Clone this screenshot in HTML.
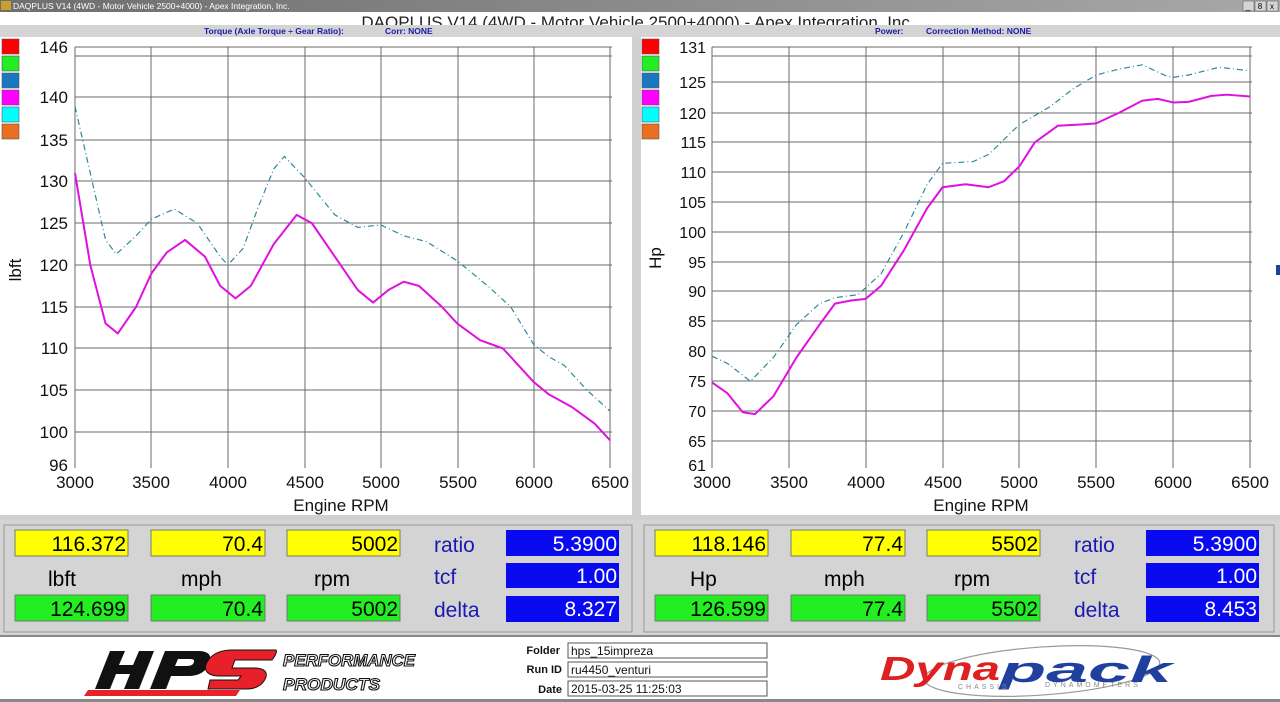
<!DOCTYPE html>
<html><head><meta charset="utf-8"><style>
html,body{margin:0;padding:0;width:1280px;height:702px;overflow:hidden;background:#fff;font-family:"Liberation Sans",sans-serif}
svg{position:absolute;left:0;top:0}
</style></head><body>
<svg width="1280" height="702" viewBox="0 0 1280 702" font-family="Liberation Sans, sans-serif">
<defs>
<linearGradient id="tb" x1="0" y1="0" x2="1" y2="0"><stop offset="0" stop-color="#6e6e6e"/><stop offset="1" stop-color="#a8a8a8"/></linearGradient>
</defs>
<rect width="1280" height="702" fill="#fff"/>
<!-- title bar -->
<rect x="0" y="0" width="1280" height="12" fill="url(#tb)"/>
<rect x="1" y="1" width="10" height="9" fill="#c8a030"/>
<text x="13" y="9" font-size="8.5" fill="#fff">DAQPLUS V14 (4WD - Motor Vehicle 2500+4000) - Apex Integration, Inc.</text>
<rect x="1243" y="1" width="11" height="10" fill="#d4d4d4" stroke="#555" stroke-width="0.5"/>
<rect x="1255" y="1" width="11" height="10" fill="#d4d4d4" stroke="#555" stroke-width="0.5"/>
<rect x="1267" y="1" width="11" height="10" fill="#d4d4d4" stroke="#555" stroke-width="0.5"/>
<text x="1272" y="9" font-size="8" text-anchor="middle">x</text>
<text x="1260" y="9" font-size="8" text-anchor="middle">8</text>
<text x="1248" y="9" font-size="8" text-anchor="middle">_</text>
<text x="638" y="28" font-size="17" text-anchor="middle" fill="#222">DAQPLUS V14 (4WD - Motor Vehicle 2500+4000) - Apex Integration, Inc.</text>
<rect x="0" y="25" width="1280" height="12" fill="#d4d4d4"/>
<text x="204" y="34" font-size="8.5" font-weight="bold" fill="#1a1aa8">Torque (Axle Torque ÷ Gear Ratio):</text>
<text x="385" y="34" font-size="8.5" font-weight="bold" fill="#1a1aa8">Corr: NONE</text>
<text x="875" y="34" font-size="8.5" font-weight="bold" fill="#1a1aa8">Power:</text>
<text x="926" y="34" font-size="8.5" font-weight="bold" fill="#1a1aa8">Correction Method: NONE</text>
<!-- panel separators -->
<rect x="632" y="37" width="9" height="483" fill="#d0d0d0"/>
<rect x="0" y="515" width="1280" height="5" fill="#d0d0d0"/>

<!-- legends -->
<g stroke="#555" stroke-width="0.6">
<rect x="2" y="39" width="17" height="15" fill="#ff0000"/><rect x="2" y="56" width="17" height="15" fill="#22ee22"/><rect x="2" y="73" width="17" height="15" fill="#1a78c0"/><rect x="2" y="90" width="17" height="15" fill="#ff00ff"/><rect x="2" y="97" width="0" height="0"/><rect x="2" y="107" width="17" height="15" fill="#00ffff"/><rect x="2" y="124" width="17" height="15" fill="#e87020"/>
<rect x="642" y="39" width="17" height="15" fill="#ff0000"/><rect x="642" y="56" width="17" height="15" fill="#22ee22"/><rect x="642" y="73" width="17" height="15" fill="#1a78c0"/><rect x="642" y="90" width="17" height="15" fill="#ff00ff"/><rect x="642" y="107" width="17" height="15" fill="#00ffff"/><rect x="642" y="124" width="17" height="15" fill="#e87020"/>
</g>

<!-- LEFT CHART grid -->
<g stroke="#6a6a6a" stroke-width="1">
<line x1="75" y1="47" x2="612" y2="47"/><line x1="75" y1="56" x2="612" y2="56"/>
<line x1="75" y1="97" x2="612" y2="97"/><line x1="75" y1="140" x2="612" y2="140"/><line x1="75" y1="181" x2="612" y2="181"/><line x1="75" y1="223" x2="612" y2="223"/><line x1="75" y1="265" x2="612" y2="265"/><line x1="75" y1="307" x2="612" y2="307"/><line x1="75" y1="348" x2="612" y2="348"/><line x1="75" y1="390" x2="612" y2="390"/><line x1="75" y1="432" x2="612" y2="432"/>
<line x1="75" y1="47" x2="75" y2="468"/><line x1="151" y1="47" x2="151" y2="468"/><line x1="228" y1="47" x2="228" y2="468"/><line x1="305" y1="47" x2="305" y2="468"/><line x1="381" y1="47" x2="381" y2="468"/><line x1="458" y1="47" x2="458" y2="468"/><line x1="534" y1="47" x2="534" y2="468"/><line x1="610" y1="47" x2="610" y2="468"/>
</g>
<g font-size="17" fill="#111" text-anchor="end">
<text x="68" y="53">146</text><text x="68" y="103">140</text><text x="68" y="146">135</text><text x="68" y="187">130</text><text x="68" y="229">125</text><text x="68" y="271">120</text><text x="68" y="313">115</text><text x="68" y="354">110</text><text x="68" y="396">105</text><text x="68" y="438">100</text><text x="68" y="471">96</text>
</g>
<g font-size="17" fill="#111" text-anchor="middle">
<text x="75" y="488">3000</text><text x="151" y="488">3500</text><text x="228" y="488">4000</text><text x="305" y="488">4500</text><text x="381" y="488">5000</text><text x="458" y="488">5500</text><text x="534" y="488">6000</text><text x="610" y="488">6500</text>
<text x="341" y="511">Engine RPM</text>
</g>
<text x="0" y="0" font-size="17" fill="#111" transform="translate(21,270) rotate(-90)" text-anchor="middle">lbft</text>

<g transform="translate(75,432) scale(0.15286,-8.35) translate(-3000,-100)" fill="none">
<polyline vector-effect="non-scaling-stroke" stroke="#2a8a9a" stroke-width="1.2" stroke-dasharray="6,3,1,3" points="3000,139 3100,131 3200,123 3270,121.3 3400,123.5 3500,125.5 3650,126.7 3800,125 3950,121 4000,120 4100,122 4200,127 4300,131.5 4370,133 4500,130.5 4700,126 4850,124.5 5000,124.8 5150,123.5 5300,122.8 5500,120.5 5700,117.5 5850,115 6000,110.5 6100,109 6200,108 6350,105 6500,102.5"/>
<polyline vector-effect="non-scaling-stroke" stroke="#e010e0" stroke-width="2" stroke-linejoin="round" points="3000,131 3100,120 3200,113 3280,111.8 3400,115 3500,119 3600,121.5 3720,123 3850,121 3950,117.5 4050,116 4150,117.5 4300,122.5 4450,126 4550,125 4700,121 4850,117 4950,115.5 5050,117 5150,118 5250,117.5 5400,115 5500,113 5650,111 5800,110 5900,108 6000,106 6100,104.5 6250,103 6400,101 6500,99"/>
</g>

<!-- RIGHT CHART grid -->
<g stroke="#6a6a6a" stroke-width="1">
<line x1="712" y1="47" x2="1252" y2="47"/><line x1="712" y1="56" x2="1252" y2="56"/>
<line x1="712" y1="82" x2="1252" y2="82"/><line x1="712" y1="113" x2="1252" y2="113"/><line x1="712" y1="142" x2="1252" y2="142"/><line x1="712" y1="172" x2="1252" y2="172"/><line x1="712" y1="202" x2="1252" y2="202"/><line x1="712" y1="232" x2="1252" y2="232"/><line x1="712" y1="262" x2="1252" y2="262"/><line x1="712" y1="291" x2="1252" y2="291"/><line x1="712" y1="321" x2="1252" y2="321"/><line x1="712" y1="351" x2="1252" y2="351"/><line x1="712" y1="381" x2="1252" y2="381"/><line x1="712" y1="411" x2="1252" y2="411"/><line x1="712" y1="441" x2="1252" y2="441"/>
<line x1="712" y1="47" x2="712" y2="468"/><line x1="789" y1="47" x2="789" y2="468"/><line x1="866" y1="47" x2="866" y2="468"/><line x1="943" y1="47" x2="943" y2="468"/><line x1="1019" y1="47" x2="1019" y2="468"/><line x1="1096" y1="47" x2="1096" y2="468"/><line x1="1173" y1="47" x2="1173" y2="468"/><line x1="1250" y1="47" x2="1250" y2="468"/>
</g>
<g font-size="16" fill="#111" text-anchor="end">
<text x="706" y="53">131</text><text x="706" y="88">125</text><text x="706" y="119">120</text><text x="706" y="148">115</text><text x="706" y="178">110</text><text x="706" y="208">105</text><text x="706" y="238">100</text><text x="706" y="268">95</text><text x="706" y="297">90</text><text x="706" y="327">85</text><text x="706" y="357">80</text><text x="706" y="387">75</text><text x="706" y="417">70</text><text x="706" y="447">65</text><text x="706" y="471">61</text>
</g>
<g font-size="17" fill="#111" text-anchor="middle">
<text x="712" y="488">3000</text><text x="789" y="488">3500</text><text x="866" y="488">4000</text><text x="943" y="488">4500</text><text x="1019" y="488">5000</text><text x="1096" y="488">5500</text><text x="1173" y="488">6000</text><text x="1250" y="488">6500</text>
<text x="981" y="511">Engine RPM</text>
</g>
<text x="0" y="0" font-size="17" fill="#111" transform="translate(661,258) rotate(-90)" text-anchor="middle">Hp</text>

<g transform="translate(712,232) scale(0.1537,-5.97) translate(-3000,-100)" fill="none">
<polyline vector-effect="non-scaling-stroke" stroke="#2a8a9a" stroke-width="1.2" stroke-dasharray="6,3,1,3" points="3000,79.2 3100,78 3250,75 3400,79 3550,84.5 3700,88 3800,89 3950,89.5 4100,93 4250,100 4400,108 4500,111.5 4700,111.8 4800,113 5000,118 5200,121 5350,124 5500,126.3 5650,127.3 5800,128 5950,126.2 6000,125.9 6100,126.3 6300,127.6 6500,127"/>
<polyline vector-effect="non-scaling-stroke" stroke="#e010e0" stroke-width="2" stroke-linejoin="round" points="3000,74.8 3100,73 3200,69.8 3280,69.5 3400,72.5 3550,79 3700,84.5 3800,88 3900,88.5 4000,88.8 4100,91 4250,97 4400,104 4500,107.5 4650,108 4800,107.5 4900,108.5 5000,111 5100,115 5250,117.8 5400,118 5500,118.2 5650,120 5800,122 5900,122.3 6000,121.7 6100,121.8 6250,122.8 6350,123 6500,122.7"/>
</g>

<!-- DATA PANELS -->
<rect x="0" y="520" width="1280" height="117" fill="#d4d4d4"/>
<rect x="4" y="525" width="628" height="107" fill="none" stroke="#999"/>
<rect x="644" y="525" width="630" height="107" fill="none" stroke="#999"/>
<g font-size="21">
<g id="L">
<rect x="15" y="530" width="113" height="26" fill="#ffff00" stroke="#777"/><rect x="151" y="530" width="114" height="26" fill="#ffff00" stroke="#777"/><rect x="287" y="530" width="113" height="26" fill="#ffff00" stroke="#777"/>
<rect x="15" y="595" width="113" height="26" fill="#22ee22" stroke="#777"/><rect x="151" y="595" width="114" height="26" fill="#22ee22" stroke="#777"/><rect x="287" y="595" width="113" height="26" fill="#22ee22" stroke="#777"/>
<rect x="506" y="530" width="113" height="26" fill="#0a0af0"/><rect x="506" y="563" width="113" height="25" fill="#0a0af0"/><rect x="506" y="596" width="113" height="26" fill="#0a0af0"/>
</g>
<text x="126" y="551" text-anchor="end">116.372</text><text x="263" y="551" text-anchor="end">70.4</text><text x="398" y="551" text-anchor="end">5002</text>
<text x="126" y="616" text-anchor="end">124.699</text><text x="263" y="616" text-anchor="end">70.4</text><text x="398" y="616" text-anchor="end">5002</text>
<text x="48" y="586">lbft</text><text x="181" y="586">mph</text><text x="314" y="586">rpm</text>
<text x="434" y="552" fill="#1a1ab0">ratio</text><text x="434" y="584" fill="#1a1ab0">tcf</text><text x="434" y="617" fill="#1a1ab0">delta</text>
<text x="617" y="551" text-anchor="end" fill="#fff">5.3900</text><text x="617" y="583" text-anchor="end" fill="#fff">1.00</text><text x="617" y="616" text-anchor="end" fill="#fff">8.327</text>

<use href="#L" x="640"/>
<text x="766" y="551" text-anchor="end">118.146</text><text x="903" y="551" text-anchor="end">77.4</text><text x="1038" y="551" text-anchor="end">5502</text>
<text x="766" y="616" text-anchor="end">126.599</text><text x="903" y="616" text-anchor="end">77.4</text><text x="1038" y="616" text-anchor="end">5502</text>
<text x="690" y="586">Hp</text><text x="824" y="586">mph</text><text x="954" y="586">rpm</text>
<text x="1074" y="552" fill="#1a1ab0">ratio</text><text x="1074" y="584" fill="#1a1ab0">tcf</text><text x="1074" y="617" fill="#1a1ab0">delta</text>
<text x="1257" y="551" text-anchor="end" fill="#fff">5.3900</text><text x="1257" y="583" text-anchor="end" fill="#fff">1.00</text><text x="1257" y="616" text-anchor="end" fill="#fff">8.453</text>
</g>
<rect x="0" y="635" width="1280" height="2" fill="#888"/>
<rect x="0" y="699" width="1280" height="3" fill="#888"/>

<!-- footer info -->
<g font-size="11" font-weight="bold" text-anchor="end" fill="#111">
<text x="560" y="654">Folder</text><text x="562" y="673">Run ID</text><text x="562" y="693">Date</text>
</g>
<g fill="#fff" stroke="#555" stroke-width="1">
<rect x="568" y="643" width="199" height="15"/><rect x="568" y="662" width="199" height="15"/><rect x="568" y="681" width="199" height="15"/>
</g>
<g font-size="12" fill="#111">
<text x="571" y="655">hps_15impreza</text><text x="571" y="674">ru4450_venturi</text><text x="571" y="693">2015-03-25 11:25:03</text>
</g>

<!-- HPS logo -->
<path d="M88,690 L240,690 L236,696 L84,696 Z" fill="#e8202a"/>
<path d="M95,689 L110,651 L125,651 L119,665 L133,665 L139,651 L154,651 L139,689 L124,689 L130,674 L116,674 L110,689 Z" fill="#111"/>
<path d="M150,689 L165,651 L200,651 Q214,652 209,664 Q204,676 188,676 L171,676 L166,689 Z M175,666 L187,666 Q193,666 194,662 Q195,659 190,659 L178,659 Z" fill="#111" fill-rule="evenodd"/>
<path d="M208,689 L248,689 Q262,688 266,677 Q268,669 256,668 L232,668 L235,660 L272,660 Q278,652 276,650 L230,650 Q212,651 206,664 Q203,675 218,676 L241,676 L238,680 L210,680 Z" fill="#e8202a" stroke="#111" stroke-width="1"/>
<g font-size="17" font-weight="bold" font-style="italic" fill="#fff" stroke="#111" stroke-width="1.1">
<text x="283" y="666" textLength="132" lengthAdjust="spacingAndGlyphs">PERFORMANCE</text>
<text x="283" y="690" textLength="97" lengthAdjust="spacingAndGlyphs">PRODUCTS</text>
</g>

<!-- Dynapack logo -->
<ellipse cx="1042" cy="671" rx="118" ry="24" fill="none" stroke="#999" stroke-width="1.2" transform="rotate(-4 1042 671)"/>
<text x="880" y="680" font-size="33" font-weight="bold" font-style="italic" fill="#e02020" textLength="120" lengthAdjust="spacingAndGlyphs">Dyna</text>
<text x="1000" y="682" font-size="36" font-weight="bold" font-style="italic" fill="#2040a0" textLength="172" lengthAdjust="spacingAndGlyphs">pack</text>
<text x="958" y="689" font-size="7" fill="#888" letter-spacing="3">CHASSIS</text>
<text x="1045" y="687" font-size="7" fill="#888" letter-spacing="3">DYNAMOMETERS</text>
<rect x="1276" y="265" width="4" height="10" fill="#2040a0"/>
</svg>
</body></html>
